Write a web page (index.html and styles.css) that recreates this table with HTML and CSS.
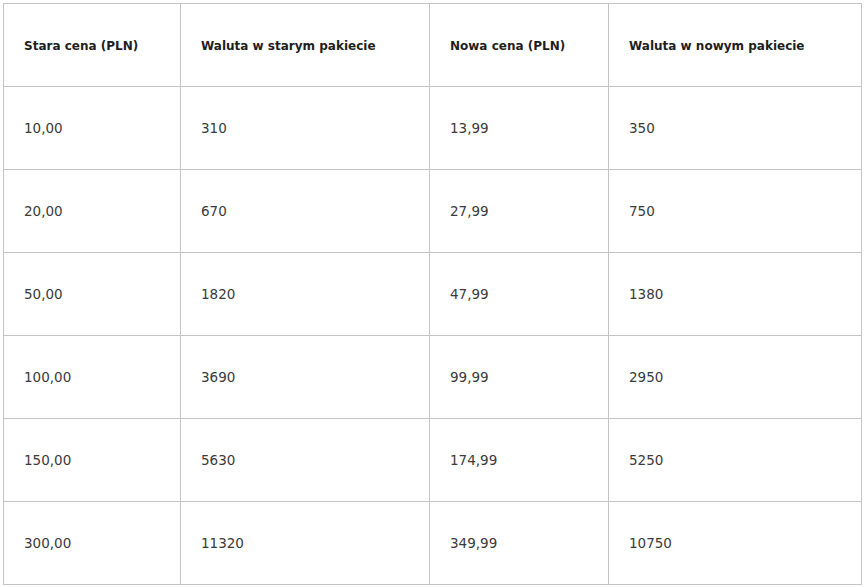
FILE: index.html
```html
<!DOCTYPE html>
<html lang="pl">
<head>
<meta charset="utf-8">
<title>Ceny</title>
<link rel="stylesheet" href="styles.css">
</head>
<body>
<table class="prices">
  <colgroup>
    <col class="c1"><col class="c2"><col class="c3"><col class="c4">
  </colgroup>
  <thead>
    <tr><th>Stara cena (PLN)</th><th>Waluta w starym pakiecie</th><th>Nowa cena (PLN)</th><th>Waluta w nowym pakiecie</th></tr>
  </thead>
  <tbody>
    <tr><td>10,00</td><td>310</td><td>13,99</td><td>350</td></tr>
    <tr><td>20,00</td><td>670</td><td>27,99</td><td>750</td></tr>
    <tr><td>50,00</td><td>1820</td><td>47,99</td><td>1380</td></tr>
    <tr><td>100,00</td><td>3690</td><td>99,99</td><td>2950</td></tr>
    <tr><td>150,00</td><td>5630</td><td>174,99</td><td>5250</td></tr>
    <tr><td>300,00</td><td>11320</td><td>349,99</td><td>10750</td></tr>
  </tbody>
</table>
</body>
</html>
```
FILE: styles.css
```css
html, body { margin: 0; padding: 0; background: #fff; }
body { padding: 3px 0 0 3px; }
.prices {
  border-collapse: collapse;
  table-layout: fixed;
  width: 858px;
  font-family: "DejaVu Sans", Verdana, sans-serif;
}
.c1 { width: 177px; }
.c2 { width: 249px; }
.c3 { width: 179px; }
.c4 { width: 253px; }
.prices th, .prices td {
  border: 1px solid #c4c4c4;
  height: 83px;
  padding: 0 0 0 20px;
  text-align: left;
  vertical-align: middle;
  box-sizing: border-box;
}
.prices th {
  padding-top: 2px;
  font-size: 12px;
  font-weight: bold;
  color: #1e1e1e;
}
.prices td {
  font-size: 13.5px;
  color: #3a3a3a;
}
```
